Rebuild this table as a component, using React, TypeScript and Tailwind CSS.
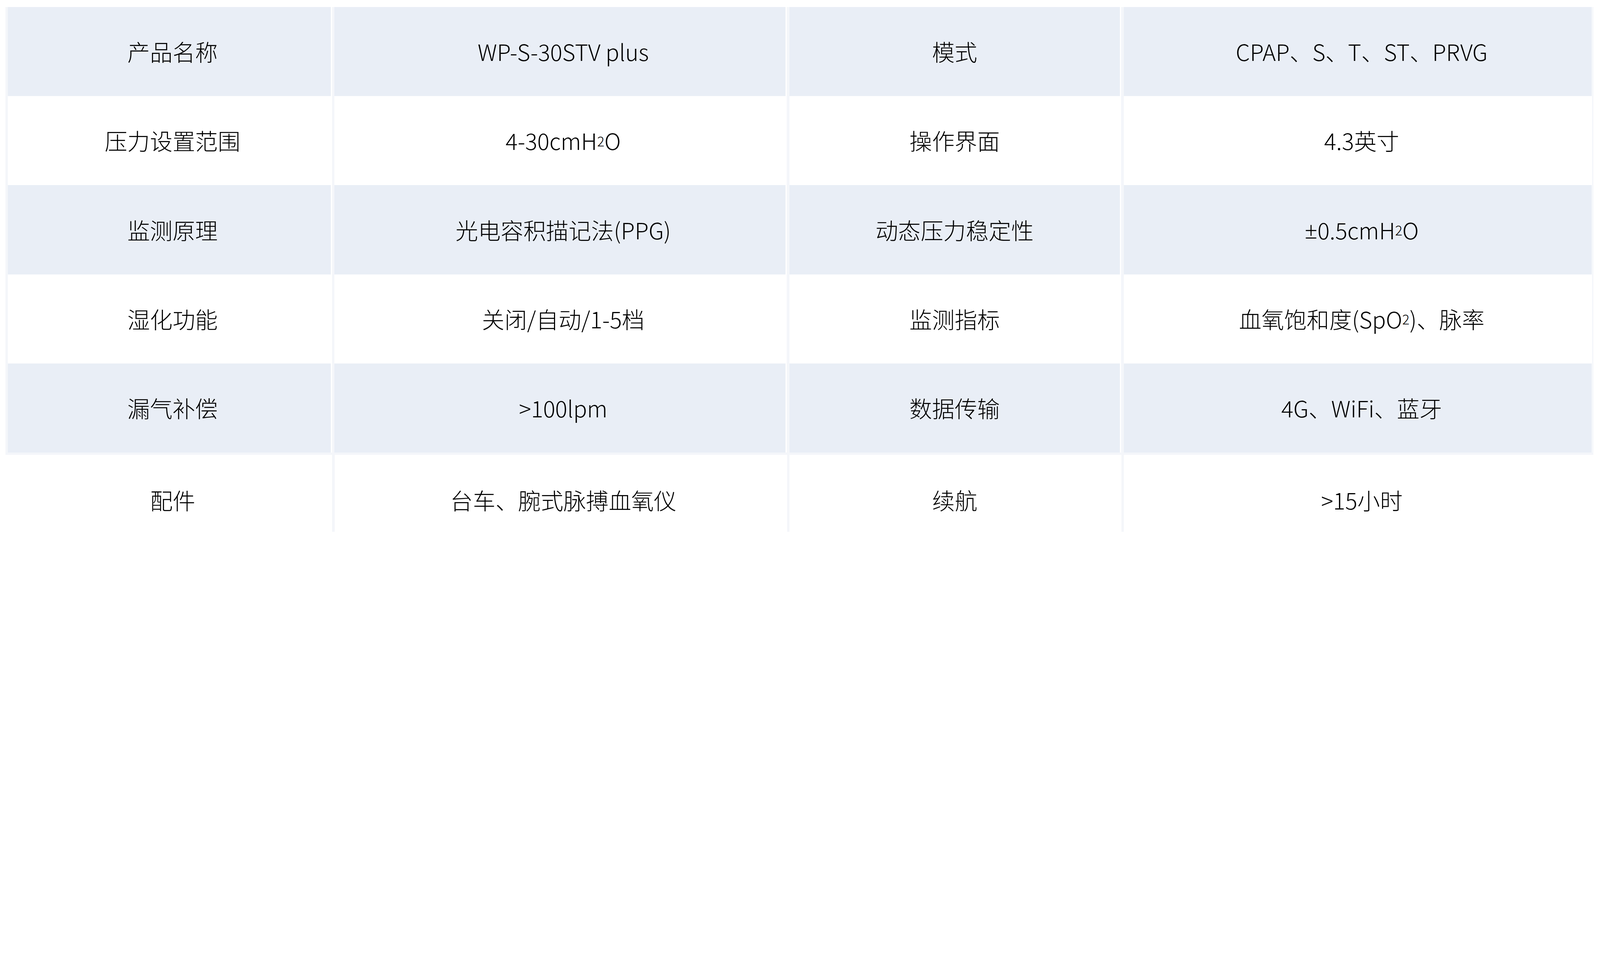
import React from "react";

type Row = [React.ReactNode, React.ReactNode, React.ReactNode, React.ReactNode];

// sizes are in vw so the table keeps the reference proportions at any viewport width
function Sub({ children }: { children: React.ReactNode }) {
  return <span className="text-[0.6em]">{children}</span>;
}

const rows: Row[] = [
  ["产品名称", "WP-S-30STV plus", "模式", "CPAP、S、T、ST、PRVG"],
  ["压力设置范围", <>4-30cmH<Sub>2</Sub>O</>, "操作界面", "4.3英寸"],
  [
    "监测原理",
    "光电容积描记法(PPG)",
    "动态压力稳定性",
    <><span className="font-['Noto_Sans',sans-serif]">±</span>0.5cmH<Sub>2</Sub>O</>,
  ],
  ["湿化功能", "关闭/自动/1-5档", "监测指标", <>血氧饱和度(SpO<Sub>2</Sub>)、脉率</>],
  ["漏气补偿", ">100lpm", "数据传输", "4G、WiFi、蓝牙"],
  ["配件", "台车、腕式脉搏血氧仪", "续航", ">15小时"],
];

function Divider({ short }: { short?: boolean }) {
  return (
    <div
      className={`ml-[0.085vw] w-[0.156vw] shrink-0 bg-[#f4f6fa] ${short ? "h-[4.81vw] self-start" : ""}`}
    />
  );
}

function TableRow({ row, striped, last }: { row: Row; striped: boolean; last?: boolean }) {
  const bg = striped ? "bg-[#e9eef6]" : "bg-white";
  return (
    <div className={`flex ${last ? "h-[5.657vw]" : "h-[5.572vw]"}`}>
      <div className={`w-[20.167vw] shrink-0 flex items-center justify-center pl-[0.4vw] ${bg}`}>
        {row[0]}
      </div>
      <Divider short={last} />
      <div className={`w-[28.185vw] shrink-0 flex items-center justify-center pl-[0.4vw] ${bg}`}>
        {row[1]}
      </div>
      <Divider short={last} />
      <div className={`w-[20.662vw] shrink-0 flex items-center justify-center ${bg}`}>
        {row[2]}
      </div>
      <Divider short={last} />
      <div className={`w-[29.26vw] shrink-0 flex items-center justify-center pl-[0.48vw] ${bg}`}>
        {row[3]}
      </div>
    </div>
  );
}

export default function App() {
  const body = rows.slice(0, 5);
  const lastRow = rows[5];
  return (
    <div className="w-full h-[34.59vw] overflow-hidden bg-white pt-[0.438vw] pl-[0.354vw] font-['Noto_Sans_CJK_SC','Noto_Sans',sans-serif] font-light text-[1.414vw] leading-none text-black">
      <div className="w-[99.236vw] border-l-[0.156vw] border-r-[0.085vw] border-b-[0.17vw] border-[#f4f6fa]">
        {body.map((row, i) => (
          <TableRow key={i} row={row} striped={i % 2 === 0} />
        ))}
      </div>
      <div className="pl-[0.156vw]">
        <TableRow row={lastRow} striped={false} last />
      </div>
    </div>
  );
}
